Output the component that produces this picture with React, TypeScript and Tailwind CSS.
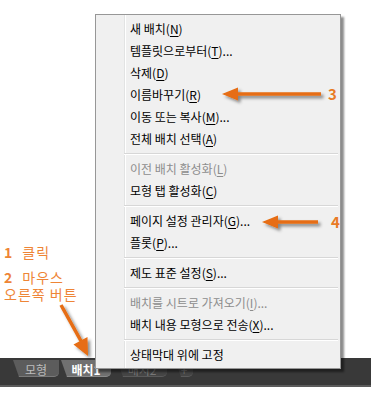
type Item = { label: string; key?: string; tail?: string; disabled?: boolean } | 'sep';

const items: Item[] = [
  { label: '새 배치', key: 'N' },
  { label: '템플릿으로부터', key: 'T', tail: '...' },
  { label: '삭제', key: 'D' },
  { label: '이름바꾸기', key: 'R' },
  { label: '이동 또는 복사', key: 'M', tail: '...' },
  { label: '전체 배치 선택', key: 'A' },
  'sep',
  { label: '이전 배치 활성화', key: 'L', disabled: true },
  { label: '모형 탭 활성화', key: 'C' },
  'sep',
  { label: '페이지 설정 관리자', key: 'G', tail: '...' },
  { label: '플롯', key: 'P', tail: '...' },
  'sep',
  { label: '제도 표준 설정', key: 'S', tail: '...' },
  'sep',
  { label: '배치를 시트로 가져오기', key: 'I', tail: '...', disabled: true },
  { label: '배치 내용 모형으로 전송', key: 'X', tail: '...' },
  'sep',
  { label: '상태막대 위에 고정' },
];

const font = "font-['Noto_Sans_CJK_KR','Noto_Sans',sans-serif]";

const ContextMenu = () => (
  <div
    className={`absolute left-[95px] top-[14px] w-[246px] h-[355px] bg-[#f0f0f0] border border-[#979797] shadow-[3px_3px_2px_rgba(0,0,0,0.45)] flex ${font}`}
  >
    <div className="w-[29px] border-r border-[#e2e3e3]" />
    <div className="flex-1 flex flex-col pt-[3px] border-l border-white">
      {items.map((item, i) =>
        item === 'sep' ? (
          <div key={i} className="h-[8px] flex flex-col justify-center pr-[2px] -ml-[2px]">
            <div className="h-px bg-[#d7d7d7]" />
            <div className="h-px bg-white" />
          </div>
        ) : (
          <div
            key={i}
            className={`h-[22px] flex items-center pl-[4px] text-[12px] leading-none ${
              item.disabled ? 'text-[#8d8d8d]' : 'text-black'
            }`}
          >
            <span>{item.label}</span>
            {item.key && (
              <span>
                (<span className="underline underline-offset-2">{item.key}</span>)
              </span>
            )}
            {item.tail && <span>{item.tail}</span>}
          </div>
        ),
      )}
    </div>
  </div>
);

const Arrows = () => (
  <svg className="absolute inset-0 pointer-events-none" width="380" height="400" viewBox="0 0 380 400">
    <defs>
      <filter id="sh" x="-20%" y="-50%" width="150%" height="200%">
        <feDropShadow dx="2.5" dy="2.5" stdDeviation="1.6" floodColor="#000" floodOpacity="0.45" />
      </filter>
    </defs>
    <g fill="#e66d12" stroke="#e66d12" filter="url(#sh)">
      <line x1="234" y1="94" x2="321" y2="94" strokeWidth="3.5" />
      <polygon points="222,94 238,87.5 238,100.5" stroke="none" />
      <line x1="274" y1="222" x2="318" y2="222" strokeWidth="3.5" />
      <polygon points="262,222 278,215.5 278,228.5" stroke="none" />
      <line x1="61" y1="305" x2="81" y2="341" strokeWidth="3.5" />
      <polygon points="88,356 73.5,344.5 87.5,337" stroke="none" />
    </g>
  </svg>
);

const Tab = ({ label, className }: { label: string; className: string }) => (
  <div
    className={`h-[17px] flex items-center justify-center pt-[3px] rounded-b-[5px] [clip-path:polygon(0_0,100%_0,100%_100%,6px_100%)] text-[12px] leading-[14px] ${className}`}
  >
    {label}
  </div>
);

export default function App() {
  return (
    <div className={`relative w-[380px] h-[400px] bg-white overflow-hidden flex flex-col ${font}`}>
      <div className="h-[358px] relative">
        <div className="absolute left-[4px] top-[244px] text-[#ee8536] text-[14px] tracking-[1px]">
          <div className="flex gap-[9px] h-[17px] items-center leading-[17px]">
            <span className="font-bold">1</span>
            <span>클릭</span>
          </div>
          <div className="flex gap-[9px] mt-[8px] h-[17px] items-center leading-[17px]">
            <span className="font-bold">2</span>
            <span>마우스</span>
          </div>
          <div className="h-[17px] leading-[17px]">오른쪽 버튼</div>
        </div>
      </div>
      <div className="w-[371px] h-[29px] bg-[#393939] border-b-2 border-[#5b5b5b] flex items-start gap-[2px] pl-[13px] pt-[2px]">
        <Tab label="모형" className="w-[46px] bg-[#5c5c5c] text-[#bcbcbc] border-b border-[#7a7a7a]" />
        <Tab label="배치1" className="w-[50px] bg-[#707070] text-white font-bold border-b border-[#8a8a8a]" />
        <Tab label="배치2" className="w-[50px] ml-[4px] bg-[#454545] text-[#777] border-b border-[#5a5a5a]" />
        <Tab label="+" className="w-[18px] ml-[6px] bg-[#454545] text-[#777] border-b border-[#5a5a5a]" />
      </div>
      <ContextMenu />
      <Arrows />
      <span className="absolute left-[328px] top-[86px] text-[#e87a25] text-[15px] font-bold leading-none">3</span>
      <span className="absolute left-[331px] top-[214px] text-[#e87a25] text-[15px] font-bold leading-none">4</span>
    </div>
  );
}
